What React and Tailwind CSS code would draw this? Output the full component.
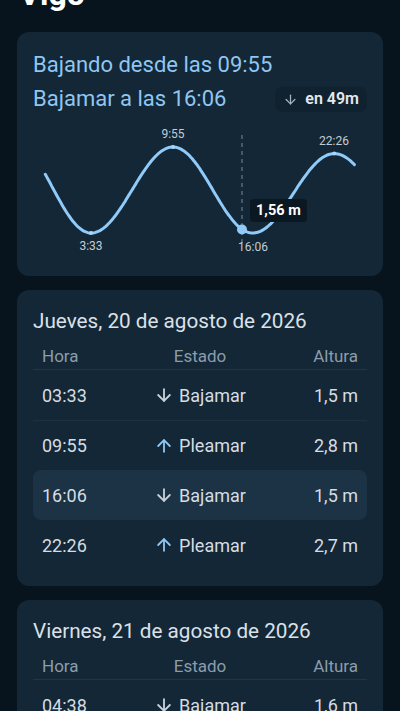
import { ArrowDown, ArrowUp } from "lucide-react";

const days = [
  {
    title: "Jueves, 20 de agosto de 2026",
    rows: [
      { hora: "03:33", estado: "Bajamar", altura: "1,5 m", up: false },
      { hora: "09:55", estado: "Pleamar", altura: "2,8 m", up: true },
      { hora: "16:06", estado: "Bajamar", altura: "1,5 m", up: false, current: true },
      { hora: "22:26", estado: "Pleamar", altura: "2,7 m", up: true },
    ],
  },
  {
    title: "Viernes, 21 de agosto de 2026",
    rows: [{ hora: "04:38", estado: "Bajamar", altura: "1,6 m", up: false }],
  },
];

// tide extremes in hours / metres, used to draw the curve
const extremes = [
  [-2.5, 2.9],
  [3.55, 1.5],
  [9.917, 2.8],
  [16.1, 1.5],
  [22.433, 2.7],
  [28.6, 1.6],
];

const X0 = 45.3 - 17;
const PX_H = 12.88;
const Y_TOP = 120;
const toX = (t) => X0 + t * PX_H;
const toY = (h) => 233 - Y_TOP - (h - 1.5) * 66.15;

function heightAt(t) {
  for (let i = 0; i < extremes.length - 1; i++) {
    const [t1, h1] = extremes[i];
    const [t2, h2] = extremes[i + 1];
    if (t >= t1 && t <= t2) {
      const f = (t - t1) / (t2 - t1);
      return h2 + (h1 - h2) * (1 + Math.cos(Math.PI * f)) / 2;
    }
  }
  return 2;
}

function curvePath() {
  let d = "";
  for (let i = 0; i <= 240; i++) {
    const t = (i / 240) * 24;
    const x = toX(t).toFixed(1);
    const y = toY(heightAt(t)).toFixed(1);
    d += (i === 0 ? "M" : "L") + x + " " + y + " ";
  }
  return d;
}

function TideChart() {
  const nowX = 242 - 17;
  const nowY = 229.5 - Y_TOP;
  return (
    <div className="relative h-[140px] mt-[7px]">
      <svg width="366" height="140" className="absolute left-[-16px] top-0">
        <line x1={nowX} y1={15} x2={nowX} y2={123} stroke="#6b7d8c" strokeWidth="1.2" strokeDasharray="4 4" />
        <path d={curvePath()} fill="none" stroke="#90caf9" strokeWidth="3" strokeLinecap="round" />
        <circle cx={toX(3.55)} cy={toY(1.5)} r="2" fill="#a9d6fb" />
        <circle cx={toX(9.917)} cy={toY(2.8)} r="2" fill="#a9d6fb" />
        <circle cx={toX(22.433)} cy={toY(2.7)} r="2" fill="#a9d6fb" />
        <circle cx={nowX} cy={nowY} r="5" fill="#90caf9" />
        <text x={173 - 17} y={18} textAnchor="middle" fontSize="12" fill="#c3ccd5" fontFamily="Roboto, sans-serif">9:55</text>
        <text x={91 - 17} y={130} textAnchor="middle" fontSize="12" fill="#c3ccd5" fontFamily="Roboto, sans-serif">3:33</text>
        <text x={253 - 17} y={131} textAnchor="middle" fontSize="12" fill="#c3ccd5" fontFamily="Roboto, sans-serif">16:06</text>
        <text x={334 - 17} y={25} textAnchor="middle" fontSize="12" fill="#c3ccd5" fontFamily="Roboto, sans-serif">22:26</text>
      </svg>
      <div className="absolute left-[217px] top-[79px] h-[23px] px-[6px] rounded-[4px] bg-[#0b1822] flex items-center text-[14.5px] font-bold text-white">
        1,56 m
      </div>
    </div>
  );
}

function DayCard({ day }) {
  return (
    <div className="bg-[#132736] rounded-[12px] px-4 pt-[17px] pb-4">
      <h2 className="text-[20.7px] leading-[28px] text-[#dbe1e8]">{day.title}</h2>
      <div className="grid grid-cols-3 px-[9px] mt-[9px] pb-[1px] border-b border-[#1f3646] text-[17px] leading-[24px] text-[#8c9cab]">
        <span>Hora</span>
        <span className="text-center">Estado</span>
        <span className="text-right">Altura</span>
      </div>
      <div className="flex flex-col">
        {day.rows.map((r, i) => (
          <div
            key={r.hora}
            className={
              "grid grid-cols-3 items-center h-[50px] px-[9px] text-[18px] text-[#d6dce3] rounded-[8px] " +
              (r.current ? "bg-[#1b3345]" : "") +
              (i > 0 && !r.current && !day.rows[i - 1].current ? " border-t border-[#1a3141] rounded-none" : "")
            }
          >
            <span>{r.hora}</span>
            <span className="flex items-center justify-center gap-[5px]">
              {r.up ? (
                <ArrowUp size={20} strokeWidth={2.2} className="text-[#8fc7f4]" />
              ) : (
                <ArrowDown size={20} strokeWidth={2.2} className="text-[#c9d1da]" />
              )}
              {r.estado}
            </span>
            <span className="text-right">{r.altura}</span>
          </div>
        ))}
      </div>
    </div>
  );
}

export default function App() {
  return (
    <div className="min-h-screen h-[711px] overflow-hidden bg-[#08141d] font-['Roboto',sans-serif] px-[17px]">
      <h1 className="text-[32px] leading-[36px] font-bold text-white mt-[-24px] pl-[2px]">Vigo</h1>
      <div className="flex flex-col gap-[14px] mt-[20px]">
        <div className="bg-[#132736] rounded-[12px] px-4 pt-[19px] pb-[16px] h-[244px]">
          <div className="text-[22px] leading-[28px] text-[#8fc6f2]">Bajando desde las 09:55</div>
          <div className="flex items-center justify-between mt-[6px]">
            <div className="text-[22px] leading-[28px] text-[#8fc6f2]">Bajamar a las 16:06</div>
            <div className="flex items-center gap-[7px] h-[25px] px-[8px] rounded-[7px] bg-[#10222f] text-[16px] font-semibold text-[#e4e9ee]">
              <ArrowDown size={15} strokeWidth={2} className="text-[#a3b3c1]" />
              en 49m
            </div>
          </div>
          <TideChart />
        </div>
        {days.map((d) => (
          <DayCard key={d.title} day={d} />
        ))}
      </div>
    </div>
  );
}
